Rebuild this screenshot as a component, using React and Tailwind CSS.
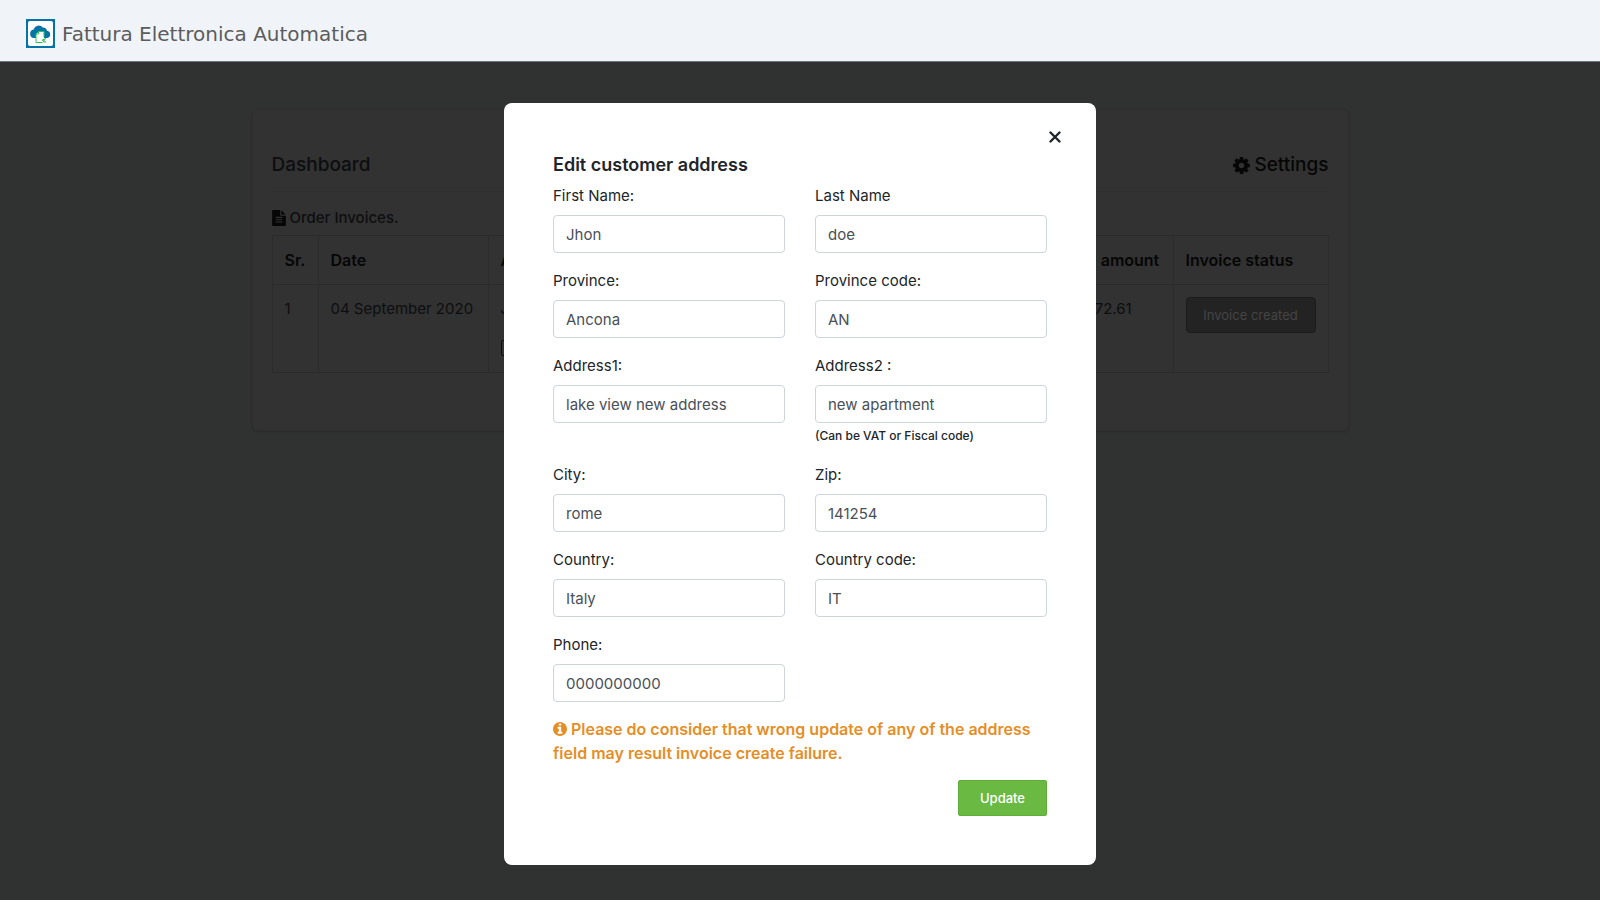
import React, { useState } from 'react';

const FIELDS = [
    { id: 'firstName', label: 'First Name:', value: 'Jhon' },
    { id: 'lastName', label: 'Last Name', value: 'doe' },
    { id: 'province', label: 'Province:', value: 'Ancona' },
    { id: 'provinceCode', label: 'Province code:', value: 'AN' },
    { id: 'address1', label: 'Address1:', value: 'lake view new address' },
    { id: 'address2', label: 'Address2 :', value: 'new apartment', hint: '(Can be VAT or Fiscal code)' },
    { id: 'city', label: 'City:', value: 'rome' },
    { id: 'zip', label: 'Zip:', value: '141254' },
    { id: 'country', label: 'Country:', value: 'Italy' },
    { id: 'countryCode', label: 'Country code:', value: 'IT' },
    { id: 'phone', label: 'Phone:', value: '0000000000' },
];

const GearIcon = ({ className }) => (
    <svg className={className} viewBox="128 128 1536 1536" fill="currentColor" aria-hidden="true">
        <path d="M1152 896q0-106-75-181t-181-75-181 75-75 181 75 181 181 75 181-75 75-181zm512-109v222q0 12-8 23t-20 13l-185 28q-19 54-39 91 35 50 107 138 10 12 10 25t-9 23q-27 37-99 108t-94 71q-12 0-26-9l-138-108q-44 23-91 38-16 136-29 186-7 28-36 28h-222q-14 0-24.500-8.500t-11.500-21.500l-28-184q-49-16-90-37l-141 107q-10 9-25 9-14 0-25-11-126-114-165-168-7-10-7-23 0-12 8-23 15-21 51-66.500t54-70.500q-27-50-41-99l-183-27q-13-2-21-12.500t-8-23.500v-222q0-12 8-23t19-13l186-28q14-46 39-92-40-57-107-138-10-12-10-24 0-10 9-23 26-36 98.500-107.500t94.500-71.500q13 0 26 10l138 107q44-23 91-38 16-136 29-186 7-28 36-28h222q14 0 24.500 8.500t11.500 21.500l28 184q49 16 90 37l142-107q9-9 24-9 13 0 25 10 129 119 165 170 7 8 7 22 0 12-8 23-15 21-51 66.500t-54 70.500q26 50 41 98l183 28q13 2 21 12.500t8 23.500z" />
    </svg>
);

const FileIcon = ({ className }) => (
    <svg className={className} viewBox="128 0 1536 1792" fill="currentColor" aria-hidden="true">
        <path d="M1596 476q14 14 28 36h-472v-472q22 14 36 28zm-476 164h544v1056q0 40-28 68t-68 28h-1344q-40 0-68-28t-28-68v-1600q0-40 28-68t68-28h800v544q0 40 28 68t68 28zm160 736v-64q0-14-9-23t-23-9h-704q-14 0-23 9t-9 23v64q0 14 9 23t23 9h704q14 0 23-9t9-23zm0-256v-64q0-14-9-23t-23-9h-704q-14 0-23 9t-9 23v64q0 14 9 23t23 9h704q14 0 23-9t9-23zm0-256v-64q0-14-9-23t-23-9h-704q-14 0-23 9t-9 23v64q0 14 9 23t23 9h704q14 0 23-9t9-23z" />
    </svg>
);

const InfoIcon = ({ className }) => (
    <svg className={className} viewBox="128 128 1536 1536" fill="currentColor" aria-hidden="true">
        <path d="M1152 1376v-160q0-14-9-23t-23-9h-96v-512q0-14-9-23t-23-9h-320q-14 0-23 9t-9 23v160q0 14 9 23t23 9h96v320h-96q-14 0-23 9t-9 23v160q0 14 9 23t23 9h448q14 0 23-9t9-23zm-128-896v-160q0-14-9-23t-23-9h-192q-14 0-23 9t-9 23v160q0 14 9 23t23 9h192q14 0 23-9t9-23zm640 416q0 209-103 385.500t-279.500 279.500-385.500 103-385.500-103-279.500-279.500-103-385.500 103-385.500 279.500-279.500 385.500-103 385.500 103 279.500 279.500 103 385.500z" />
    </svg>
);

const Logo = () => (
    <svg className="size-[29px]" viewBox="0 0 29 29" aria-hidden="true">
        <rect width="29" height="29" fill="#0573a8" />
        <rect x="2" y="2" width="25" height="25" rx="2" fill="#fff" />
        <path d="M8 19a4.300 4.300 0 0 1-.4-8.500A5.300 5.300 0 0 1 16.800 8.500a4.300 4.300 0 0 1 4.200 3.200 3.700 3.700 0 0 1 .2 7.300z" fill="#0573a8" />
        <path d="M12.500 12.500h5.500v6l-1 5h-7v-8.500z" fill="#fff" />
        <path d="M16.500 23.500H10v-8.500l2.500-2.500H18v5.500M12.500 12.500V15H10" fill="none" stroke="#2cc45a" />
        <path d="M20 19.500l-3.500 1.500 1.500 2h2M16.500 21H19" fill="none" stroke="#12c22e" />
    </svg>
);

const Header = () => (
    <header className="flex h-[62px] items-center gap-[7px] border-b border-gray-500 bg-[#f0f4f8] px-[26px] pt-1.5">
        <Logo />
        <span className="font-['DejaVu_Sans',sans-serif] text-xl text-[#5c5c5c]">Fattura Elettronica Automatica</span>
    </header>
);

const Dashboard = () => (
    <main className="mx-auto mt-[47px] w-full max-w-[1097px] rounded-md border border-[#2e2e2e] bg-[#323232] px-[19px] pt-[39px] pb-[57px] text-[#0d0e0f] shadow-sm">
        <div className="flex items-center justify-between border-b border-[#303030] pb-[10px] text-[19px] leading-8 font-medium">
            <h1>Dashboard</h1>
            <a href="#settings" className="flex items-center gap-1 text-[#060606]">
                <GearIcon className="size-[17px]" />
                Settings
            </a>
        </div>
        <h2 className="mt-3 flex items-center gap-1 pb-[3px] leading-7 font-medium">
            <FileIcon className="h-4 w-[14px] text-[#060606]" />
            Order Invoices.
        </h2>
        <table className="w-full border-collapse text-left">
            <thead className="text-base leading-6 text-[#060606]">
                <tr>
                    <th className="w-[46px] border border-[#2c2c2c] p-3 font-semibold">Sr.</th>
                    <th className="w-[170px] border border-[#2c2c2c] p-3 font-semibold">Date</th>
                    <th className="border border-[#2c2c2c] p-3 font-semibold">Address</th>
                    <th className="w-[127px] border border-[#2c2c2c] p-3 font-semibold whitespace-nowrap">Total amount</th>
                    <th className="w-[155px] border border-[#2c2c2c] p-3 font-semibold">Invoice status</th>
                </tr>
            </thead>
            <tbody>
                <tr className="align-top">
                    <td className="border border-[#2c2c2c] p-3">1</td>
                    <td className="border border-[#2c2c2c] p-3 whitespace-nowrap">04 September 2020</td>
                    <td className="border border-[#2c2c2c] p-3">
                        Jhon doe
                        <button type="button" className="mt-[19px] mb-1 block h-4 w-8 rounded-xs border border-[#0d0e0f]" aria-label="Edit" />
                    </td>
                    <td className="border border-[#2c2c2c] p-3 pl-[34px]">€ 72.61</td>
                    <td className="border border-[#2c2c2c] p-3">
                        <button type="button" disabled className="block h-9 w-full rounded-sm border border-[#1c1c1c] bg-[#232323] text-[13px] whitespace-nowrap text-[#454545]">
                            Invoice created
                        </button>
                    </td>
                </tr>
            </tbody>
        </table>
    </main>
);

const Field = ({ field, value, onChange }) => (
    <div>
        <label htmlFor={field.id} className="mb-[7px] block">{field.label}</label>
        <input
            id={field.id}
            type="text"
            value={value}
            onChange={(e) => onChange(field.id, e.target.value)}
            className="block h-[38px] w-full rounded-sm border border-[#ced4da] bg-white px-3 text-[#495057]"
        />
        {field.hint && <small className="mt-0.5 block text-xs leading-[22px] font-medium">{field.hint}</small>}
    </div>
);

const EditAddressModal = () => {
    const [values, setValues] = useState(Object.fromEntries(FIELDS.map(f => [f.id, f.value])));

    const handleChange = (id, value) => setValues({ ...values, [id]: value });

    return (
        <div role="dialog" aria-labelledby="modal-title" className="relative w-[592px] rounded-lg bg-white px-[49px] pt-[50px] pb-[49px] text-[#212529]">
            <button type="button" aria-label="Close" className="absolute top-6 right-[31px] flex size-5 items-center justify-center">
                <svg className="size-3" viewBox="0 0 12 12" stroke="currentColor" strokeWidth="2.400" strokeLinecap="round" aria-hidden="true">
                    <path d="M1.500 1.500l9 9M10.500 1.500l-9 9" />
                </svg>
            </button>
            <h2 id="modal-title" className="mb-[7px] text-lg leading-6 font-semibold">Edit customer address</h2>
            <form onSubmit={(e) => e.preventDefault()}>
                <div className="grid grid-cols-2 gap-x-[30px] gap-y-4">
                    {FIELDS.map(field => (
                        <Field key={field.id} field={field} value={values[field.id]} onChange={handleChange} />
                    ))}
                </div>
                <p className="mt-[15px] text-base leading-6 font-semibold text-[#e58e26]">
                    <InfoIcon className="mr-1 inline size-[14px] align-[-1px]" />
                    Please do consider that wrong update of any of the address field may result invoice create failure.
                </p>
                <div className="mt-[15px] flex justify-end">
                    <button type="submit" className="h-9 w-[89px] rounded-xs border border-[#5fae3b] bg-[#69b942] text-[13px] font-medium text-white">
                        Update
                    </button>
                </div>
            </form>
        </div>
    );
};

export default function App() {
    return (
        <div className="flex min-h-screen flex-col bg-[#303231] font-['Inter','Liberation_Sans',sans-serif] text-[15px] leading-6">
            <Header />
            <div className="relative grow">
                <Dashboard />
                <div className="absolute inset-x-0 top-[41px] flex justify-center">
                    <EditAddressModal />
                </div>
            </div>
        </div>
    );
}
